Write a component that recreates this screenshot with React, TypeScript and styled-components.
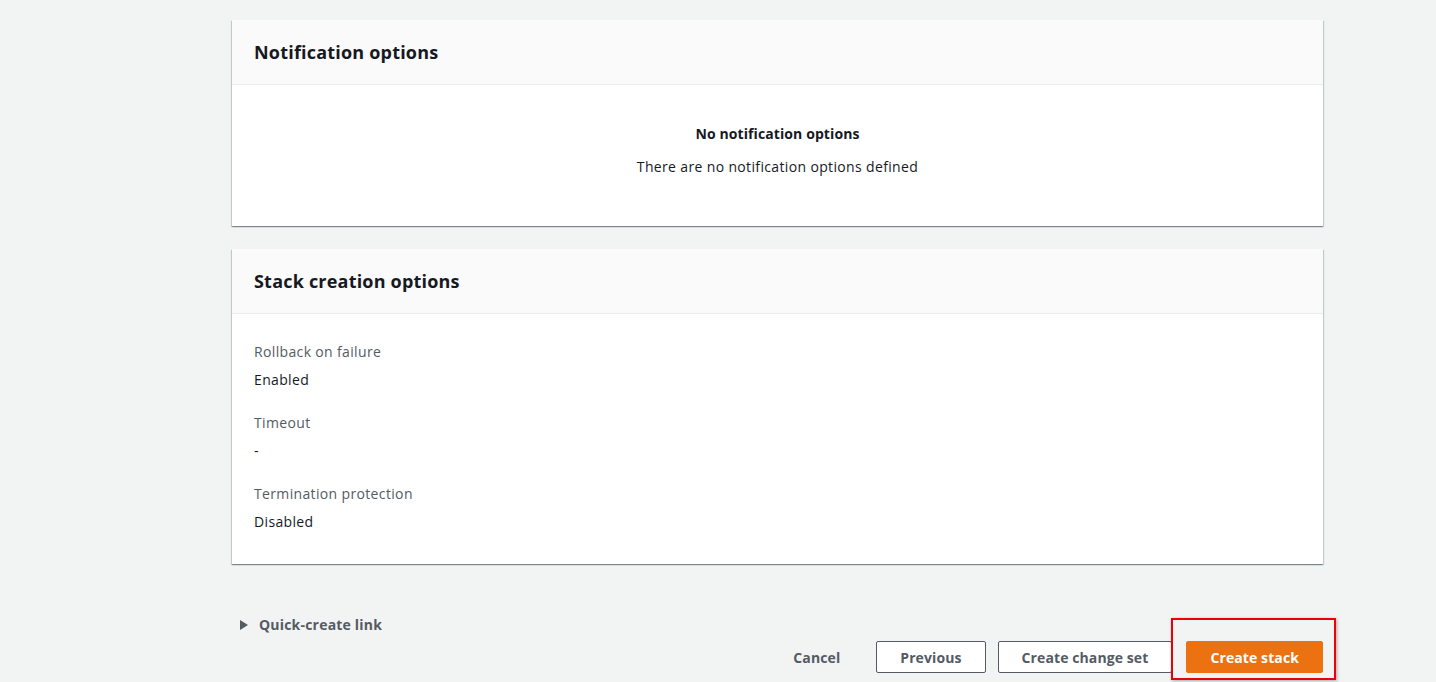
import React from 'react'
import styled, { createGlobalStyle } from 'styled-components'

const Global = createGlobalStyle`
  html, body {
    margin: 0;
    padding: 0;
    background: #f2f3f3;
    font-family: "Open Sans", "Noto Sans", Arial, sans-serif;
    color: #16191f;
  }
`

const Page = styled.main`
  width: 1091px;
  padding: 20px 0 24px 232px;
  display: flex;
  flex-direction: column;
  gap: 23px;
`

const Card = styled.section`
  background: #fff;
  box-shadow: 0 1px 1px 0 rgba(0, 28, 36, 0.3), 1px 1px 1px 0 rgba(0, 28, 36, 0.15),
    -1px 1px 1px 0 rgba(0, 28, 36, 0.15);
`

const CardHeader = styled.header`
  height: 64px;
  display: flex;
  align-items: center;
  padding: 0 22px;
  background: #fafafa;
  border-bottom: 1px solid #eaeded;
`

const CardTitle = styled.h2`
  margin: 0;
  font-size: 18px;
  font-weight: 700;
  letter-spacing: 0.2px;
  color: #16191f;
`

const Empty = styled.div`
  height: 141px;
  display: flex;
  flex-direction: column;
  align-items: center;
  padding-top: 39px;
  box-sizing: border-box;
  font-size: 14px;
`

const EmptyTitle = styled.b`
  line-height: 20px;
  letter-spacing: 0.1px;
`

const EmptyText = styled.p`
  margin: 13px 0 0;
  line-height: 20px;
  letter-spacing: 0.35px;
`

const Fields = styled.dl`
  margin: 0;
  padding: 28px 22px 32px;
  display: flex;
  flex-direction: column;
  gap: 23px;
  font-size: 14px;
  letter-spacing: 0.35px;
`

const Field = styled.div`
  display: flex;
  flex-direction: column;
  gap: 8px;
`

const Label = styled.dt`
  color: #545b64;
  line-height: 20px;
`

const Value = styled.dd`
  margin: 0;
  line-height: 20px;
`

const Footer = styled.footer`
  margin-top: 28px;
  display: flex;
  flex-direction: column;
  gap: 6px;
`

const Expander = styled.div`
  display: flex;
  align-items: center;
  gap: 11px;
  padding-left: 8px;
  line-height: 20px;
  font-size: 14px;
  font-weight: 700;
  letter-spacing: 0.2px;
  color: #545b64;
`

const Caret = styled.span`
  width: 0;
  height: 0;
  border-top: 5px solid transparent;
  border-bottom: 5px solid transparent;
  border-left: 8px solid #545b64;
`

const Actions = styled.div`
  display: flex;
  justify-content: flex-end;
  align-items: center;
  gap: 12px;
`

const Button = styled.button<{ $variant?: 'link' | 'normal' | 'primary' }>`
  height: 32px;
  box-sizing: border-box;
  padding: 0 23px;
  border-radius: 2px;
  font-family: inherit;
  font-size: 14px;
  font-weight: 700;
  letter-spacing: 0.1px;
  cursor: pointer;
  border: 1px solid
    ${p => (p.$variant === 'primary' ? '#ec7211' : p.$variant === 'link' ? 'transparent' : '#545b64')};
  background: ${p => (p.$variant === 'primary' ? '#ec7211' : p.$variant === 'link' ? 'transparent' : '#fff')};
  color: ${p => (p.$variant === 'primary' ? '#fff' : '#545b64')};
`

const Highlight = styled.div`
  position: relative;
  display: flex;
  margin-left: 2px;

  &::after {
    content: '';
    position: absolute;
    left: -15px;
    right: -13px;
    top: -23px;
    bottom: -7px;
    border: 2px solid #e8000b;
    box-shadow: 1px 1px 3px rgba(0, 0, 0, 0.3);
    pointer-events: none;
  }
`

const stackOptions = [
  ['Rollback on failure', 'Enabled'],
  ['Timeout', '-'],
  ['Termination protection', 'Disabled'],
]

export default function App() {
  return (
    <>
      <Global />
      <Page>
        <Card>
          <CardHeader>
            <CardTitle>Notification options</CardTitle>
          </CardHeader>
          <Empty>
            <EmptyTitle>No notification options</EmptyTitle>
            <EmptyText>There are no notification options defined</EmptyText>
          </Empty>
        </Card>
        <Card>
          <CardHeader>
            <CardTitle>Stack creation options</CardTitle>
          </CardHeader>
          <Fields>
            {stackOptions.map(([label, value]) => (
              <Field key={label}>
                <Label>{label}</Label>
                <Value>{value}</Value>
              </Field>
            ))}
          </Fields>
        </Card>
        <Footer>
          <Expander>
            <Caret />
            Quick-create link
          </Expander>
          <Actions>
            <Button $variant="link">Cancel</Button>
            <Button>Previous</Button>
            <Button>Create change set</Button>
            <Highlight>
              <Button $variant="primary">Create stack</Button>
            </Highlight>
          </Actions>
        </Footer>
      </Page>
    </>
  )
}
